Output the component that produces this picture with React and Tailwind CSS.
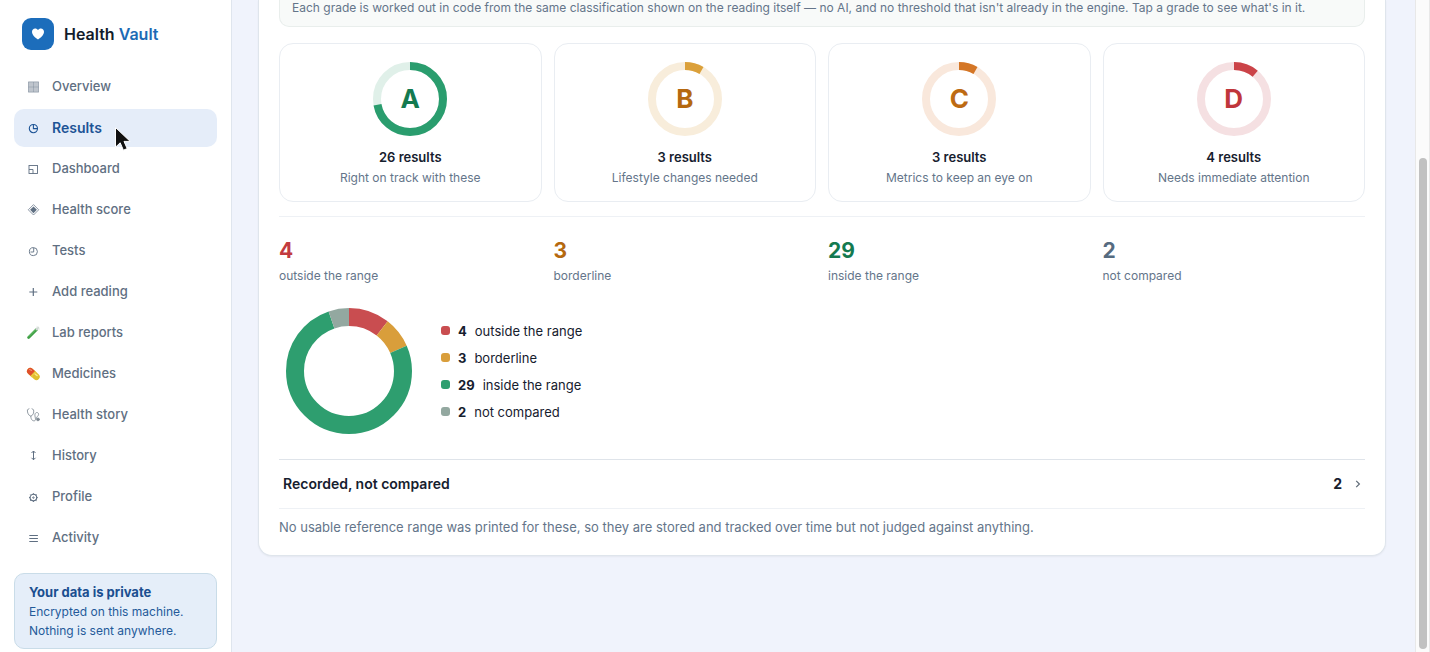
import React from "react";

const stroke = { fill: "none", stroke: "currentColor", strokeWidth: 1 };

const icons = {
  overview: (
    <g>
      <rect x="3" y="2.5" width="11" height="11" fill="currentColor" opacity="0.4" />
      <path d="M3.5 3h10v10h-10zM8.5 3v10M3.5 8h10" {...stroke} strokeWidth="0.7" opacity="0.4" />
    </g>
  ),
  results: (
    <g {...stroke} strokeWidth="1.1">
      <circle cx="8.4" cy="8.6" r="4.1" />
      <path d="M8.4 4.5v4.1h4.1" />
    </g>
  ),
  dashboard: (
    <g {...stroke} strokeWidth="0.9">
      <rect x="4" y="4.5" width="8.5" height="8" />
      <path d="M4 8.5h4v4" />
    </g>
  ),
  score: (
    <g>
      <path d="M8.5 2.6L13.7 7.8L8.5 13L3.3 7.8z" {...stroke} strokeWidth="0.7" />
      <path d="M8.5 4.4L11.9 7.8L8.5 11.2L5.1 7.8z" fill="currentColor" />
    </g>
  ),
  tests: (
    <g {...stroke} strokeWidth="0.9">
      <circle cx="8.4" cy="8.6" r="4" />
      <path d="M8.7 4.8v4.2h-3.2" transform="rotate(0)" />
    </g>
  ),
  add: <path d="M8.3 4v8M4.3 8h8" {...stroke} strokeWidth="1.2" />,
  lab: (
    <g strokeLinecap="round">
      <path d="M3.6 12.4L11.6 4.4" stroke="#3f9f45" strokeWidth="2.8" />
      <path d="M4.2 11.2L10.4 5" stroke="#7bd07a" strokeWidth="0.7" />
      <path d="M11.8 4.2L13 3" stroke="#cfd8d3" strokeWidth="2.6" />
      <path d="M12 1.8L14.4 4" stroke="#dfe5e2" strokeWidth="1" />
    </g>
  ),
  medicines: (
    <g strokeLinecap="round">
      <path d="M5.3 5.2L11.4 10.7" stroke="#e0c02f" strokeWidth="6.6" />
      <path d="M5.3 5.2L7 6.7" stroke="#e04f2b" strokeWidth="6.6" />
      <path d="M6.2 10.8L10.8 5.7" stroke="#e9c93a" strokeWidth="2.2" strokeLinecap="butt" />
      <path d="M4.6 3.6L6.6 4.4" stroke="#f59a80" strokeWidth="1" />
      <path d="M10 8L12.2 9.6" stroke="#f8ea88" strokeWidth="1.3" />
    </g>
  ),
  story: (
    <g fill="none" stroke="#87919a" strokeWidth="0.9" strokeLinecap="round">
      <path d="M4 1.8L2.4 2.8C2.2 5.8 3.4 8.4 5.8 9.2C8 8.4 9.2 5.8 8.6 2.8L7 1.8" />
      <path d="M5.8 9.2C5.8 12.6 7.4 14 9.4 13.8C11.8 13.4 9.4 9.4 10 7.2C10.6 4.8 13.6 5 13.6 7.4C13.6 9.2 11 9.8 11.2 11.4" />
      <circle cx="13" cy="12.4" r="1.4" fill="#7b858d" />
    </g>
  ),
  history: <path d="M8.5 3v8.8M6.5 5L8.5 3L10.5 5M6.5 9.8L8.5 11.8L10.5 9.8" {...stroke} />,
  profile: (
    <g {...stroke}>
      <circle cx="8.4" cy="8.6" r="3.3" strokeWidth="1.1" />
      <circle cx="8.4" cy="8.6" r="0.7" />
      <path d="M8.4 4.2v1.2M8.4 11.8V13M4 8.6h1.2M11.6 8.6h1.2M5.3 5.5l.8.8M10.7 10.9l.8.8M5.3 11.7l.8-.8M10.7 6.3l.8-.8" />
    </g>
  ),
  activity: <path d="M4.3 5.5h8.6M4.3 8.5h8.6M4.3 11.5h8.6" {...stroke} />,
};

const nav = [
  ["overview", "Overview"],
  ["results", "Results"],
  ["dashboard", "Dashboard"],
  ["score", "Health score"],
  ["tests", "Tests"],
  ["add", "Add reading"],
  ["lab", "Lab reports"],
  ["medicines", "Medicines"],
  ["story", "Health story"],
  ["history", "History"],
  ["profile", "Profile"],
  ["activity", "Activity"],
];

const grades = [
  { grade: "A", count: 26, note: "Right on track with these", color: "#2a9d6e", track: "#e0f0e9", text: "text-[#147a50]" },
  { grade: "B", count: 3, note: "Lifestyle changes needed", color: "#dba03a", track: "#f8eddb", text: "text-[#b5680f]" },
  { grade: "C", count: 3, note: "Metrics to keep an eye on", color: "#d47626", track: "#f9e8dc", text: "text-[#bd6a12]" },
  { grade: "D", count: 4, note: "Needs immediate attention", color: "#cb4348", track: "#f5e0e2", text: "text-[#c0363b]" },
];

const ranges = [
  { count: 4, label: "outside the range", color: "#c94d50", text: "text-[#c23b40]", dot: "bg-[#c94d50]" },
  { count: 3, label: "borderline", color: "#d99e3b", text: "text-[#b5690f]", dot: "bg-[#d99e3b]" },
  { count: 29, label: "inside the range", color: "#2e9e6f", text: "text-[#147a50]", dot: "bg-[#2e9e6f]" },
  { count: 2, label: "not compared", color: "#93a8a0", text: "text-[#566b80]", dot: "bg-[#93a8a0]" },
];

function Ring({ size, radius, width, track, segments }) {
  const c = size / 2;
  let start = 0;
  return (
    <svg width={size} height={size} viewBox={`0 0 ${size} ${size}`} aria-hidden="true" className="shrink-0">
      <g transform={`rotate(-90 ${c} ${c})`} fill="none" strokeWidth={width}>
        {track && <circle cx={c} cy={c} r={radius} stroke={track} />}
        {segments.map((s) => {
          const offset = -start;
          start += s.share;
          return (
            <circle
              key={s.color}
              cx={c}
              cy={c}
              r={radius}
              stroke={s.color}
              pathLength="100"
              strokeDasharray={`${s.share} ${100 - s.share}`}
              strokeDashoffset={offset}
            />
          );
        })}
      </g>
    </svg>
  );
}

function Sidebar() {
  return (
    <aside className="flex w-[232px] shrink-0 flex-col border-r border-[#dfe5ee] bg-white px-3.5 pt-[18px]">
      <a href="#home" className="flex items-center gap-2.5 px-2 text-base font-semibold text-[#131c2b]">
        <span className="flex size-8 items-center justify-center rounded-[9px] bg-[#1c6dbb]">
          <svg width="14" height="14" viewBox="0 0 14 14" aria-hidden="true">
            <path d="M7 12.6C4.4 10.6 1 8 1 4.7C1 2.7 2.4 1.4 4.1 1.4C5.3 1.4 6.4 2 7 3.1C7.6 2 8.7 1.4 9.9 1.4C11.6 1.4 13 2.7 13 4.7C13 8 9.6 10.6 7 12.6z" fill="#fff" />
          </svg>
        </span>
        <span>
          Health <span className="text-[#1c6bb5]">Vault</span>
        </span>
      </a>
      <nav className="mt-[18px] flex flex-col gap-[3px]">
        {nav.map(([id, label]) => {
          const active = id === "results";
          return (
            <a
              key={id}
              href={`#${id}`}
              aria-current={active ? "page" : undefined}
              className={
                active
                  ? "relative flex h-[38px] items-center gap-[11px] rounded-[10px] bg-[#e5edf9] px-[11px] text-sm font-semibold text-[#1d5496]"
                  : "flex h-[38px] items-center gap-[11px] rounded-[10px] px-[11px] text-[13px] font-medium text-[#5f6f82]"
              }
            >
              <svg width="16" height="16" viewBox="0 0 16 16" aria-hidden="true">
                {icons[id]}
              </svg>
              {label}
              {active && (
                <svg width="18" height="26" viewBox="0 0 18 26" aria-hidden="true" className="absolute left-[100px] top-[17px]">
                  <path d="M1.5 1.5V21.2L6.2 16.8L9.4 24.2L13.2 22.6L10 15.4H16.2z" fill="#111" stroke="#fff" strokeWidth="1" />
                </svg>
              )}
            </a>
          );
        })}
      </nav>
      <div className="mt-4 rounded-[10px] border border-[#c9dce8] bg-[#e5eef9] px-3.5 pb-2 pt-[9px] text-xs leading-[19px] text-[#245a99]">
        <p className="text-[13px] font-bold leading-[19px] text-[#1b4f90]">Your data is private</p>
        <p>Encrypted on this machine.</p>
        <p>Nothing is sent anywhere.</p>
      </div>
    </aside>
  );
}

export default function App() {
  return (
    <div className="flex min-h-screen bg-[#f0f3fc] font-['Inter','Liberation_Sans',sans-serif] text-[#16202e]">
      <Sidebar />
      <main className="min-w-0 flex-1 pl-[26px] pr-[29px]">
        <section className="rounded-b-[14px] border border-t-0 border-[#dfe5ec] bg-white px-5 pb-[18px] shadow-xs">
          <p className="rounded-b-[10px] border border-t-0 border-[#e9eeec] bg-[#f8faf9] px-3 pb-2.5 text-xs text-[#64758a]">
            Each grade is worked out in code from the same classification shown on the reading itself — no AI, and no threshold that isn't
            already in the engine. Tap a grade to see what's in it.
          </p>

          <div className="mt-4 grid grid-cols-4 gap-3">
            {grades.map((g) => (
              <button
                key={g.grade}
                type="button"
                className="flex flex-col items-center rounded-[14px] border border-[#e9edf2] bg-white px-3 pb-[13px] pt-[18px]"
              >
                <span className="grid place-items-center">
                  <span className="col-start-1 row-start-1">
                    <Ring size={74} radius={33} width={8} track={g.track} segments={[{ color: g.color, share: (g.count / 36) * 100 }]} />
                  </span>
                  <span className={`col-start-1 row-start-1 text-[26px] font-bold leading-8 ${g.text}`}>{g.grade}</span>
                </span>
                <span className="mt-[11px] text-[13px] font-semibold leading-5">{g.count} results</span>
                <span className="text-xs leading-[21px] text-[#64758a]">{g.note}</span>
              </button>
            ))}
          </div>

          <dl className="mt-3.5 grid grid-cols-4 gap-3 border-t border-[#eef1f5] pt-[19px]">
            {ranges.map((r) => (
              <div key={r.label} className="flex flex-col-reverse">
                <dt className="text-xs leading-5 text-[#64758a]">{r.label}</dt>
                <dd className={`text-[21px] font-bold leading-[30px] ${r.text}`}>{r.count}</dd>
              </div>
            ))}
          </dl>

          <div className="mt-[15px] flex items-center gap-[22px]">
            <Ring size={140} radius={54} width={18} segments={ranges.map((r) => ({ color: r.color, share: (r.count / 38) * 100 }))} />
            <ul className="flex flex-col gap-[7px]">
              {ranges.map((r) => (
                <li key={r.label} className="flex items-center gap-2 text-[13px] leading-5">
                  <span className={`size-[9px] rounded-[3px] ${r.dot}`} />
                  <b className="font-bold">{r.count}</b>
                  <span>{r.label}</span>
                </li>
              ))}
            </ul>
          </div>

          <button
            type="button"
            className="mt-[18px] flex h-[50px] w-full items-center border-y border-b-[#eef1f5] border-t-[#dfe4ea] px-1 text-sm font-semibold"
          >
            Recorded, not compared
            <span className="ml-auto font-bold">2</span>
            <svg width="6" height="8" viewBox="0 0 6 8" aria-hidden="true" className="ml-[13px] text-[#5f6b78]">
              <path d="M1.2 0.8L4.4 4L1.2 7.2" fill="none" stroke="currentColor" strokeWidth="1.2" />
            </svg>
          </button>
          <p className="mt-2 text-[13px] leading-5 text-[#64758a]">
            No usable reference range was printed for these, so they are stored and tracked over time but not judged against anything.
          </p>
        </section>
      </main>
      <div aria-hidden="true" className="flex w-[15px] shrink-0 flex-col items-center border-x border-[#e8e8e8] bg-[#fbfbfb] pb-[3px] pt-[158px]">
        <span className="w-2 flex-1 rounded-full bg-[#c1c1c1]" />
      </div>
    </div>
  );
}
